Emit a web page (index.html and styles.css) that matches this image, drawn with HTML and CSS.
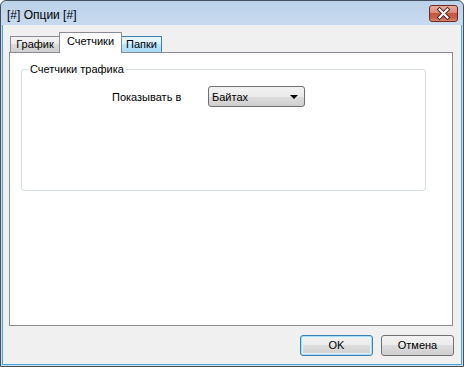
FILE: index.html
```html
<!DOCTYPE html>
<html>
<head>
<meta charset="utf-8">
<link rel="stylesheet" href="styles.css">
</head>
<body>
<div class="window">
  <div class="titlebar">
    <span class="title">[#] Опции [#]</span>
    <div class="close">
      <svg width="29" height="17" viewBox="0 0 29 17">
        <path d="M10.5 4.5 L18.5 12.5 M18.5 4.5 L10.5 12.5" stroke="#4a2a26" stroke-width="4" stroke-linecap="square" fill="none"/>
        <path d="M10.5 4.5 L18.5 12.5 M18.5 4.5 L10.5 12.5" stroke="#ffffff" stroke-width="2" stroke-linecap="square" fill="none"/>
      </svg>
    </div>
  </div>
  <div class="client">
    <div class="tabs">
      <div class="tab first">График</div>
      <div class="tab active">Счетчики</div>
      <div class="tab hot">Папки</div>
    </div>
    <div class="panel">
      <div class="group">
        <span class="legend">Счетчики трафика</span>
        <div class="row">
          <span class="label">Показывать в</span>
          <div class="combo"><span class="combo-text">Байтах</span><span class="arrow"></span></div>
        </div>
      </div>
    </div>
    <div class="buttons">
      <div class="btn default">OK</div>
      <div class="btn">Отмена</div>
    </div>
  </div>
</div>
</body>
</html>
```
FILE: styles.css
```css
html, body {
  margin: 0;
  padding: 0;
  background: #ffffff;
}
body {
  font-family: "Liberation Sans", Arial, sans-serif;
  font-size: 11px;
  color: #000;
}
.window {
  width: 464px;
  height: 367px;
  box-sizing: border-box;
  border: 1px solid #44505e;
  border-radius: 6px 6px 0 0;
  background: linear-gradient(#bcd2ea, #cadcf0 30px, #cfe0f2);
  padding: 0 1px 1px;
  display: flex;
  flex-direction: column;
}
.titlebar {
  height: 24px;
  display: flex;
  align-items: flex-start;
  padding-left: 5px;
}
.title {
  margin-top: 7px;
  font-size: 12px;
  line-height: 14px;
  color: #000;
}
.close {
  margin-left: auto;
  margin-right: 4px;
  margin-top: 4px;
  width: 29px;
  height: 17px;
  box-sizing: border-box;
  border: 1px solid #6e2a22;
  border-radius: 3px;
  background: linear-gradient(#e9ab9c, #d98b78 45%, #c65540 50%, #c9604a 80%, #d98a70);
  overflow: hidden;
  position: relative;
}
.close svg {
  position: absolute;
  left: -1px;
  top: -1px;
}
.client {
  flex: 1;
  background: #f0f0f0;
  border: 1px solid #4aa3dc;
  border-top: none;
  padding: 7px 8px 0 6px;
  display: flex;
  flex-direction: column;
}
.tabs {
  height: 20px;
  display: flex;
  align-items: flex-end;
  padding-left: 1px;
  position: relative;
  z-index: 1;
}
.tab {
  box-sizing: border-box;
  height: 16px;
  border: 1px solid #898c95;
  border-bottom: none;
  background: linear-gradient(#f2f2f2, #ebebeb 50%, #dddddd 50%, #cfcfcf);
  text-align: center;
  line-height: 15px;
}
.tab.first {
  width: 49px;
  border-right: none;
}
.tab.active {
  width: 63px;
  height: 21px;
  margin-bottom: -1px;
  background: #ffffff;
  line-height: 16px;
  padding-bottom: 3px;
}
.tab.hot {
  width: 40px;
  border-color: #3c7fb1;
  border-left: none;
  background: linear-gradient(#eaf6fd, #d9f0fc 50%, #bee6fd 50%, #a7d9f5);
}
.panel {
  height: 274px;
  box-sizing: border-box;
  border: 1px solid #898c95;
  background: #ffffff;
  padding: 16px 0 0 11px;
}
.group {
  position: relative;
  width: 405px;
  height: 122px;
  box-sizing: border-box;
  border: 1px solid #d5dfe5;
  border-radius: 3px;
}
.legend {
  position: absolute;
  left: 6px;
  top: -8px;
  padding: 0 2px;
  background: #ffffff;
  line-height: 14px;
}
.row {
  display: flex;
  align-items: center;
  margin-top: 16px;
  margin-left: 90px;
}
.label {
  width: 96px;
}
.combo {
  width: 97px;
  height: 21px;
  box-sizing: border-box;
  border: 1px solid #707070;
  border-radius: 3px;
  background: linear-gradient(#f2f2f2, #ebebeb 50%, #dddddd 50%, #cfcfcf);
  display: flex;
  align-items: center;
  padding: 0 6px 0 3px;
}
.combo-text {
  flex: 1;
}
.arrow {
  width: 0;
  height: 0;
  border-left: 4px solid transparent;
  border-right: 4px solid transparent;
  border-top: 4px solid #000;
}
.buttons {
  display: flex;
  justify-content: flex-end;
  margin-top: 9px;
  margin-right: -1px;
  gap: 8px;
}
.btn {
  width: 73px;
  height: 21px;
  box-sizing: border-box;
  border: 1px solid #707070;
  border-radius: 3px;
  background: linear-gradient(#f2f2f2, #ebebeb 50%, #dddddd 50%, #cfcfcf);
  text-align: center;
  line-height: 19px;
}
.btn.default {
  border-color: #3c7fb1;
  box-shadow: inset 0 0 0 1px #a9dcf6, inset 0 0 0 2px #e3f3fb;
}
```
